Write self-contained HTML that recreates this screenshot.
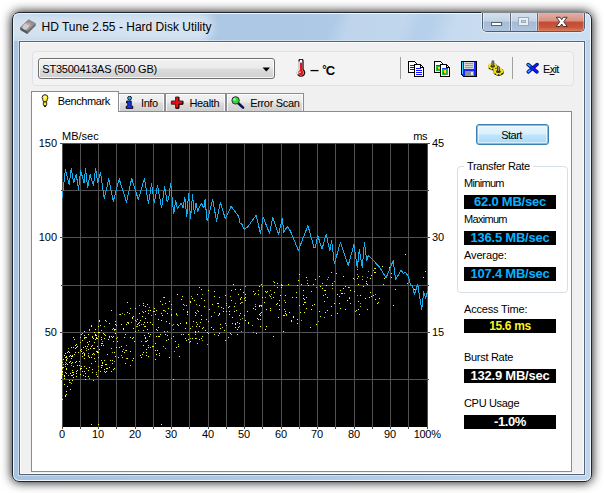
<!DOCTYPE html><html><head><meta charset="utf-8"><title>HD Tune 2.55 - Hard Disk Utility</title><style>
html,body{margin:0;padding:0;}
body{width:604px;height:493px;overflow:hidden;background:#fff;position:relative;
 font-family:"Liberation Sans",sans-serif;font-size:11px;color:#000;}
div,span{position:absolute;white-space:nowrap;box-sizing:border-box;}
.t{line-height:14px;height:14px;}
#win{left:12px;top:12px;width:580px;height:470px;border-radius:7px;border:1px solid #1f252d;
 background:linear-gradient(90deg,#a8c4e1 0px,#adc9e6 300px,#bdd5ee 580px);
 box-shadow:0 0 10.5px 0 #000,inset 0 0 0 1px rgba(255,255,255,.82);}
#client{left:19px;top:41px;width:566px;height:434px;background:#f0f0f0;border:1px solid #56657a;
 box-shadow:0 0 0 1px rgba(255,255,255,.42),inset 0 0 0 1px #fbfbfb;}
#title{left:41.5px;top:19px;font-size:12px;line-height:16px;height:16px;}
#glow{left:14px;top:14px;width:214px;height:27px;overflow:hidden;}
#glow i{position:absolute;display:block;left:-30px;top:-2px;width:229px;height:31px;border-radius:0 15px 15px 0;background:rgba(255,255,255,.5);filter:blur(5px);}
#streak{left:14px;top:14px;width:576px;height:26px;background:linear-gradient(112deg,rgba(255,255,255,0) 0%,rgba(255,255,255,0) 55%,rgba(255,255,255,.2) 58%,rgba(255,255,255,.2) 67%,rgba(255,255,255,.04) 70%,rgba(255,255,255,.04) 72%,rgba(255,255,255,.24) 76%,rgba(255,255,255,.24) 100%);}
#cap{left:482px;top:13px;width:103px;height:19px;border:1px solid #4f5d6e;border-top:none;border-radius:0 0 5px 5px;overflow:hidden;
 box-shadow:0 0 0 1px rgba(255,255,255,.45);}
#bmin{left:0;top:0;width:28px;height:18px;background:linear-gradient(#d3e0ee 0%,#c3d3e5 45%,#a4bad3 50%,#afc6de 100%);border-right:1px solid #5f6d7e;box-shadow:inset 1px 0 0 rgba(255,255,255,.5),inset -1px 0 0 rgba(255,255,255,.35);}
#bmax{left:28px;top:0;width:27px;height:18px;background:linear-gradient(#d3e0ee 0%,#c3d3e5 45%,#a4bad3 50%,#afc6de 100%);border-right:1px solid #5f6d7e;box-shadow:inset 1px 0 0 rgba(255,255,255,.5),inset -1px 0 0 rgba(255,255,255,.35);}
#bclose{left:55px;top:0;width:46px;height:18px;background:linear-gradient(#e4b0a6 0%,#d78f80 45%,#c24a34 50%,#c9573c 80%,#d88062 100%);box-shadow:inset 1px 0 0 rgba(255,255,255,.35),inset -1px 0 0 rgba(255,255,255,.35);}
#toolbar{left:32px;top:51px;width:542px;height:35px;border:1px solid #dde2ea;border-radius:4px;background:#f3f3f3;}
#combo{left:38px;top:58px;width:237px;height:21px;border:1px solid #707070;border-radius:3px;
 background:linear-gradient(#f2f2f2 0%,#ebebeb 48%,#dddddd 52%,#cfcfcf 100%);box-shadow:inset 0 0 0 1px rgba(255,255,255,.8);}
.sep{width:1px;background:#a0a0a0;}
#page{left:31px;top:111px;width:541px;height:361px;background:#fff;border:1px solid #898c95;}
.tab{top:93px;height:18px;border:1px solid #898c95;border-bottom:none;
 background:linear-gradient(#f2f2f2 0%,#ebebeb 48%,#dddddd 52%,#cfcfcf 100%);box-shadow:inset 1px 1px 0 rgba(255,255,255,.8),inset -1px 0 0 rgba(255,255,255,.8);}
#tab0{left:31px;top:91px;width:88px;height:21px;background:#fff;border:1px solid #898c95;border-bottom:none;box-shadow:none;}
.val{left:464px;width:92px;height:14px;background:#000;text-align:center;font-weight:bold;font-size:13px;line-height:14px;letter-spacing:-0.22px;}
.blue{color:#08b2ff;}
#start{left:476px;top:124px;width:73px;height:21px;border:1px solid #3c7fb1;border-radius:3px;
 background:linear-gradient(#eaf6fd 0%,#d9f0fc 48%,#bee6fd 52%,#a7d9f5 100%);box-shadow:inset 0 0 0 1px #48d8fb,inset 0 0 0 2px rgba(255,255,255,.5);
 text-align:center;line-height:19px;letter-spacing:-0.5px;padding:1px 2px 0 0;}
#grp{left:457px;top:166px;width:111px;height:127px;border:1px solid #d5dfe5;border-radius:4px;}
.r{text-align:right;}
.c{text-align:center;}
</style></head><body>
<div id="win"></div>
<div id="streak"></div>
<div id="glow"><i></i></div>
<svg width="18" height="17" viewBox="0 0 18 17" style="position:absolute;left:19px;top:18px">
<path d="M1.2 9.5 L9.6 1.4 L16.6 5.2 L16.9 7.6 L8.4 16 L1.5 12 Z" fill="#6d6f73"/>
<path d="M1.2 9.5 L9.6 1.4 L16.6 5.2 L8.2 13.3 Z" fill="#8e9195"/>
<ellipse cx="6.8" cy="8.6" rx="3.6" ry="2.7" transform="rotate(-42 6.8 8.6)" fill="#c9ccd0"/>
<path d="M7.5 5.2 L11.8 5.2 L11.2 7 L13 8 L10.6 8.4 L9.6 7 L7.6 6.8 Z" fill="#e59a8c"/>
<path d="M1.5 12 L8.4 16 L8.2 13.3 L1.2 9.5 Z" fill="#55575b"/>
</svg>
<div id="title">HD Tune 2.55 - Hard Disk Utility</div>
<div id="cap"><div id="bmin"></div><div id="bmax"></div><div id="bclose"></div></div>
<svg width="103" height="20" viewBox="0 0 103 20" style="position:absolute;left:482px;top:12px">
<rect x="9.5" y="10.5" width="10" height="3" fill="#fff" stroke="#56616f" stroke-width="1"/>
<rect x="36.5" y="5.5" width="10" height="8" fill="#e8eef5" stroke="#9aa7b6" stroke-width="1"/>
<rect x="39.5" y="8.5" width="4" height="2" fill="#cbd8e6" stroke="#9aa7b6" stroke-width="1"/>
<path d="M74.3 5.3 L78.1 5.3 L79.7 7.7 L81.3 5.3 L85.1 5.3 L81.7 9.8 L85.3 14.5 L81.3 14.5 L79.7 12 L78.1 14.5 L74.1 14.5 L77.7 9.8 Z" fill="#fff" stroke="#4a3030" stroke-width="1" stroke-linejoin="round"/>
</svg>
<div id="client"></div>
<div id="toolbar"></div>
<div id="combo"></div>
<div class="t " style="left:42.3px;top:62px;letter-spacing:-0.23px;">ST3500413AS (500 GB)</div>
<svg width="9" height="5" viewBox="0 0 9 5" style="position:absolute;left:262px;top:67px"><path d="M0.5 0.5 L8 0.5 L4.25 4.5 Z" fill="#000"/></svg>
<svg width="12" height="19" viewBox="0 0 12 19" style="position:absolute;left:295px;top:59px">
<path d="M4 2.2 A2 2 0 0 1 8 2.2 L8 10.6 A3.6 3.6 0 1 1 4 10.6 Z" fill="#fff" stroke="#111" stroke-width="1.3"/>
<path d="M4 2.6 L4 10.6 A3.6 3.6 0 0 0 3.2 15.4" fill="none" stroke="#f6f6f6" stroke-width="1.5"/>
<rect x="5" y="3.6" width="2.2" height="9.4" fill="#e8141c"/>
<circle cx="6" cy="13.5" r="2.6" fill="#e8141c"/>
<rect x="4.3" y="12.6" width="1.3" height="1.3" fill="#fff"/>
</svg>
<div class="t " style="left:310.2px;top:63px;font-weight:bold;font-size:13px;"><span style="position:static;display:inline-block;transform:scaleX(1.25);transform-origin:0 50%">&#8211;</span></div>
<div class="t " style="left:322.3px;top:61.7px;font-weight:bold;font-size:13px;"><span style="position:static;font-size:11px;letter-spacing:-0.9px;vertical-align:1.5px">&#176;</span>C</div>
<div class="sep" style="left:400px;top:57px;height:22px"></div>
<svg width="16" height="16" viewBox="0 0 16 16" style="position:absolute;left:408px;top:61px" shape-rendering="crispEdges">
<path d="M0.5 0.5 H6.5 L9.5 3.5 V11.5 H0.5 Z" fill="#fff" stroke="#000"/>
<path d="M2 4.5H7M2 6.5H7M2 8.5H7" stroke="#1010ff"/>
<path d="M6.5 3.5 H12.5 L15.5 6.5 V15.5 H6.5 Z" fill="#fff" stroke="#000"/>
<path d="M12.5 3.5V6.5H15.5" fill="none" stroke="#000"/>
<path d="M8 7.5H13M8 9.5H14M8 11.5H14M8 13.5H14" stroke="#1010ff"/>
</svg>
<svg width="16" height="16" viewBox="0 0 16 16" style="position:absolute;left:434px;top:61px" shape-rendering="crispEdges">
<path d="M0.5 0.5 H6.5 L9.5 3.5 V11.5 H0.5 Z" fill="#fff" stroke="#000"/>
<rect x="2" y="4" width="5" height="6" fill="#22c030"/><rect x="2" y="4" width="5" height="1" fill="#2040ff"/><rect x="4" y="6" width="2" height="2" fill="#ffe000"/><rect x="3" y="7" width="1" height="2" fill="#e02020"/>
<path d="M6.5 3.5 H12.5 L15.5 6.5 V15.5 H6.5 Z" fill="#fff" stroke="#000"/>
<path d="M12.5 3.5V6.5H15.5" fill="none" stroke="#000"/>
<rect x="8" y="7" width="6" height="7" fill="#22c030"/><rect x="8" y="7" width="6" height="1" fill="#2040ff"/><rect x="10" y="9" width="2" height="3" fill="#ffe000"/><rect x="9" y="11" width="1" height="2" fill="#e02020"/><rect x="12" y="12" width="2" height="2" fill="#808080"/>
</svg>
<svg width="16" height="16" viewBox="0 0 16 16" style="position:absolute;left:461px;top:61px" shape-rendering="crispEdges">
<path d="M0.5 0.5 H15.5 V15.5 H2.5 L0.5 13.5 Z" fill="#1428ff" stroke="#000"/>
<rect x="3" y="1" width="10" height="7" fill="#d8d8d8"/>
<path d="M4 2.5H12M4 4.5H12M4 6.5H12" stroke="#9a9a9a"/>
<rect x="4" y="10" width="9" height="5" fill="#909090"/>
<rect x="10" y="11" width="2" height="3" fill="#e8e8e8"/>
<rect x="1" y="1" width="1" height="12" fill="#40d0ff"/>
</svg>
<svg width="18" height="17" viewBox="0 0 18 17" style="position:absolute;left:487px;top:60px">
<ellipse cx="6" cy="6.9" rx="4.9" ry="3.5" fill="#1a1a1a"/>
<ellipse cx="11.7" cy="12.1" rx="5.3" ry="3.8" fill="#1a1a1a"/>
<ellipse cx="5.7" cy="6.1" rx="4" ry="2.7" fill="#f2e418" stroke="#f2e418" stroke-width="1.8" stroke-dasharray="1.6 1.3"/>
<ellipse cx="11.4" cy="11.2" rx="4.4" ry="3" fill="#f2e418" stroke="#f2e418" stroke-width="1.8" stroke-dasharray="1.7 1.4"/>
<ellipse cx="5.7" cy="6.3" rx="2.3" ry="1.4" fill="#3a3200"/>
<ellipse cx="11.4" cy="11.5" rx="2.5" ry="1.5" fill="#3a3200"/>
<rect x="5" y="0.8" width="1.8" height="5.6" rx="0.6" fill="#a8a8a8" stroke="#222" stroke-width="0.8"/>
<rect x="10.5" y="6.4" width="1.8" height="5.2" rx="0.6" fill="#a8a8a8" stroke="#222" stroke-width="0.8"/>
</svg>
<div class="sep" style="left:512px;top:57px;height:22px"></div>
<svg width="14" height="13" viewBox="0 0 14 13" style="position:absolute;left:526px;top:62px">
<path d="M2.2 2.6 L10.9 9.8 M11 2.5 L2.3 9.9" stroke="#0a0f50" stroke-width="3.5" stroke-linecap="round"/>
<path d="M2.2 2.6 L10.9 9.8 M11 2.5 L2.3 9.9" stroke="#0c18ff" stroke-width="2.2" stroke-linecap="round"/>
<path d="M2 2.4 L4 4.1 M2.2 9.8 L4.2 8.2" stroke="#20c8ff" stroke-width="1.3" stroke-linecap="round"/>
</svg>
<div class="t " style="left:543px;top:62px;letter-spacing:-0.7px;">E<u>x</u>it</div>
<div id="page"></div>
<div class="tab" style="left:118px;width:47px"></div>
<div class="tab" style="left:165px;width:61px"></div>
<div class="tab" style="left:226px;width:78px"></div>
<div id="tab0"></div>
<svg width="8" height="14" viewBox="0 0 8 14" style="position:absolute;left:41px;top:94px">
<path d="M4 0.7 A2.9 2.9 0 0 1 6.9 3.6 C6.9 5.4 5.6 6 5.5 7.8 L2.5 7.8 C2.4 6 1.1 5.4 1.1 3.6 A2.9 2.9 0 0 1 4 0.7 Z" fill="#ffef20" stroke="#222" stroke-width="1"/>
<rect x="2.3" y="8" width="3.4" height="3.6" rx="0.8" fill="#ffef20" stroke="#222" stroke-width="1"/>
<rect x="3" y="11.6" width="2" height="1.4" fill="#222"/>
<rect x="3.4" y="2" width="1.2" height="2.6" fill="#fff"/>
</svg>
<div class="t " style="left:57.8px;top:94px;letter-spacing:-0.4px;">Benchmark</div>
<svg width="9" height="13" viewBox="0 0 9 13" style="position:absolute;left:125px;top:96px">
<circle cx="4.6" cy="2.1" r="1.9" fill="#28b8ff" stroke="#000" stroke-width="0.9"/>
<path d="M1.6 5 H6.2 V10.2 H7.8 V12.4 H1.2 V10.2 H2.8 V7 H1.6 Z" fill="#1838f0" stroke="#000" stroke-width="0.9"/>
</svg>
<div class="t " style="left:141px;top:96px;letter-spacing:-0.4px;">Info</div>
<svg width="14" height="13" viewBox="0 0 14 13" style="position:absolute;left:170px;top:96px">
<path d="M5.6 1 H8.8 V5 H12.8 V8.2 H8.8 V12.2 H5.6 V8.2 H1.4 V5 H5.6 Z" fill="#e81010" stroke="#401010" stroke-width="0.9"/><path d="M8.9 1.2 V5 M12.9 5.2 V8.2 H8.9 V12.2 H5.8" fill="none" stroke="#200" stroke-width="1"/>
</svg>
<div class="t " style="left:189.5px;top:96px;letter-spacing:-0.35px;">Health</div>
<svg width="14" height="13" viewBox="0 0 14 13" style="position:absolute;left:231px;top:96px">
<path d="M6.5 6.5 L12 11.6" stroke="#101050" stroke-width="2.6" stroke-linecap="round"/>
<circle cx="4.6" cy="4.4" r="3.7" fill="#30d838" stroke="#333" stroke-width="1"/>
<circle cx="3.6" cy="3.4" r="1.2" fill="#b8ffb8"/>
</svg>
<div class="t " style="left:250.2px;top:96px;letter-spacing:-0.33px;">Error Scan</div>
<svg width="604" height="493" viewBox="0 0 604 493" style="position:absolute;left:0;top:0">
<rect x="62" y="143" width="366" height="284" fill="#000"/>
<g shape-rendering="crispEdges"><rect x="62" y="143" width="1" height="284" fill="#525252"/><rect x="62" y="427" width="1" height="2" fill="#4a4a4a"/><rect x="80" y="143" width="1" height="284" fill="#525252"/><rect x="80" y="427" width="1" height="2" fill="#4a4a4a"/><rect x="98" y="143" width="1" height="284" fill="#525252"/><rect x="98" y="427" width="1" height="2" fill="#4a4a4a"/><rect x="116" y="143" width="1" height="284" fill="#525252"/><rect x="116" y="427" width="1" height="2" fill="#4a4a4a"/><rect x="135" y="143" width="1" height="284" fill="#525252"/><rect x="135" y="427" width="1" height="2" fill="#4a4a4a"/><rect x="153" y="143" width="1" height="284" fill="#525252"/><rect x="153" y="427" width="1" height="2" fill="#4a4a4a"/><rect x="171" y="143" width="1" height="284" fill="#525252"/><rect x="171" y="427" width="1" height="2" fill="#4a4a4a"/><rect x="189" y="143" width="1" height="284" fill="#525252"/><rect x="189" y="427" width="1" height="2" fill="#4a4a4a"/><rect x="208" y="143" width="1" height="284" fill="#525252"/><rect x="208" y="427" width="1" height="2" fill="#4a4a4a"/><rect x="226" y="143" width="1" height="284" fill="#525252"/><rect x="226" y="427" width="1" height="2" fill="#4a4a4a"/><rect x="244" y="143" width="1" height="284" fill="#525252"/><rect x="244" y="427" width="1" height="2" fill="#4a4a4a"/><rect x="262" y="143" width="1" height="284" fill="#525252"/><rect x="262" y="427" width="1" height="2" fill="#4a4a4a"/><rect x="281" y="143" width="1" height="284" fill="#525252"/><rect x="281" y="427" width="1" height="2" fill="#4a4a4a"/><rect x="299" y="143" width="1" height="284" fill="#525252"/><rect x="299" y="427" width="1" height="2" fill="#4a4a4a"/><rect x="317" y="143" width="1" height="284" fill="#525252"/><rect x="317" y="427" width="1" height="2" fill="#4a4a4a"/><rect x="335" y="143" width="1" height="284" fill="#525252"/><rect x="335" y="427" width="1" height="2" fill="#4a4a4a"/><rect x="354" y="143" width="1" height="284" fill="#525252"/><rect x="354" y="427" width="1" height="2" fill="#4a4a4a"/><rect x="372" y="143" width="1" height="284" fill="#525252"/><rect x="372" y="427" width="1" height="2" fill="#4a4a4a"/><rect x="390" y="143" width="1" height="284" fill="#525252"/><rect x="390" y="427" width="1" height="2" fill="#4a4a4a"/><rect x="408" y="143" width="1" height="284" fill="#525252"/><rect x="408" y="427" width="1" height="2" fill="#4a4a4a"/><rect x="427" y="143" width="1" height="284" fill="#525252"/><rect x="427" y="427" width="1" height="2" fill="#4a4a4a"/><rect x="62" y="143" width="366" height="1" fill="#525252"/><rect x="60" y="143" width="2" height="1" fill="#4a4a4a"/><rect x="428" y="143" width="2" height="1" fill="#4a4a4a"/><rect x="62" y="190" width="366" height="1" fill="#525252"/><rect x="61" y="190" width="1" height="1" fill="#4a4a4a"/><rect x="428" y="190" width="1" height="1" fill="#4a4a4a"/><rect x="62" y="237" width="366" height="1" fill="#525252"/><rect x="60" y="237" width="2" height="1" fill="#4a4a4a"/><rect x="428" y="237" width="2" height="1" fill="#4a4a4a"/><rect x="62" y="285" width="366" height="1" fill="#525252"/><rect x="61" y="285" width="1" height="1" fill="#4a4a4a"/><rect x="428" y="285" width="1" height="1" fill="#4a4a4a"/><rect x="62" y="332" width="366" height="1" fill="#525252"/><rect x="60" y="332" width="2" height="1" fill="#4a4a4a"/><rect x="428" y="332" width="2" height="1" fill="#4a4a4a"/><rect x="62" y="379" width="366" height="1" fill="#525252"/><rect x="61" y="379" width="1" height="1" fill="#4a4a4a"/><rect x="428" y="379" width="1" height="1" fill="#4a4a4a"/></g>
<g fill="#ffff00" shape-rendering="crispEdges"><rect x="62" y="362" width="1" height="1" opacity=".75"/><rect x="62" y="367" width="1" height="1" opacity="1"/><rect x="62" y="368" width="1" height="1" opacity=".75"/><rect x="62" y="371" width="1" height="1" opacity="1"/><rect x="62" y="372" width="1" height="1" opacity=".75"/><rect x="62" y="374" width="1" height="1" opacity="1"/><rect x="62" y="399" width="1" height="1" opacity="1"/><rect x="63" y="359" width="1" height="1" opacity="1"/><rect x="63" y="364" width="1" height="1" opacity=".75"/><rect x="63" y="367" width="1" height="1" opacity="1"/><rect x="64" y="355" width="1" height="1" opacity="1"/><rect x="64" y="375" width="1" height="1" opacity="1"/><rect x="64" y="376" width="1" height="1" opacity="1"/><rect x="64" y="378" width="1" height="1" opacity="1"/><rect x="64" y="384" width="1" height="1" opacity="1"/><rect x="65" y="353" width="1" height="1" opacity="1"/><rect x="65" y="357" width="1" height="1" opacity="1"/><rect x="65" y="362" width="1" height="1" opacity=".75"/><rect x="65" y="364" width="1" height="1" opacity="1"/><rect x="65" y="366" width="1" height="1" opacity=".75"/><rect x="65" y="372" width="1" height="1" opacity="1"/><rect x="65" y="395" width="1" height="1" opacity="1"/><rect x="65" y="396" width="1" height="1" opacity="1"/><rect x="66" y="356" width="1" height="1" opacity="1"/><rect x="66" y="357" width="1" height="1" opacity="1"/><rect x="66" y="359" width="1" height="1" opacity="1"/><rect x="66" y="360" width="1" height="1" opacity="1"/><rect x="66" y="363" width="1" height="1" opacity=".75"/><rect x="66" y="368" width="1" height="1" opacity="1"/><rect x="66" y="369" width="1" height="1" opacity="1"/><rect x="66" y="373" width="1" height="1" opacity="1"/><rect x="66" y="391" width="1" height="1" opacity="1"/><rect x="66" y="394" width="1" height="1" opacity="1"/><rect x="67" y="352" width="1" height="1" opacity="1"/><rect x="67" y="358" width="1" height="1" opacity=".75"/><rect x="67" y="364" width="1" height="1" opacity="1"/><rect x="67" y="386" width="1" height="1" opacity="1"/><rect x="68" y="348" width="1" height="1" opacity=".75"/><rect x="68" y="351" width="1" height="1" opacity="1"/><rect x="68" y="375" width="1" height="1" opacity=".75"/><rect x="69" y="352" width="1" height="1" opacity="1"/><rect x="69" y="356" width="1" height="1" opacity="1"/><rect x="69" y="362" width="1" height="1" opacity="1"/><rect x="69" y="380" width="1" height="1" opacity="1"/><rect x="69" y="382" width="1" height="1" opacity=".75"/><rect x="70" y="355" width="1" height="1" opacity="1"/><rect x="70" y="361" width="1" height="1" opacity="1"/><rect x="70" y="373" width="1" height="1" opacity="1"/><rect x="70" y="382" width="1" height="1" opacity=".75"/><rect x="70" y="389" width="1" height="1" opacity="1"/><rect x="71" y="347" width="1" height="1" opacity="1"/><rect x="71" y="356" width="1" height="1" opacity="1"/><rect x="71" y="358" width="1" height="1" opacity="1"/><rect x="71" y="363" width="1" height="1" opacity="1"/><rect x="71" y="365" width="1" height="1" opacity=".75"/><rect x="71" y="375" width="1" height="1" opacity="1"/><rect x="71" y="383" width="1" height="1" opacity=".75"/><rect x="72" y="355" width="1" height="1" opacity="1"/><rect x="72" y="356" width="1" height="1" opacity="1"/><rect x="72" y="362" width="1" height="1" opacity="1"/><rect x="72" y="370" width="1" height="1" opacity="1"/><rect x="72" y="372" width="1" height="1" opacity="1"/><rect x="72" y="375" width="1" height="1" opacity="1"/><rect x="72" y="380" width="1" height="1" opacity="1"/><rect x="73" y="337" width="1" height="1" opacity="1"/><rect x="73" y="347" width="1" height="1" opacity="1"/><rect x="73" y="366" width="1" height="1" opacity="1"/><rect x="73" y="372" width="1" height="1" opacity="1"/><rect x="73" y="374" width="1" height="1" opacity="1"/><rect x="73" y="377" width="1" height="1" opacity="1"/><rect x="74" y="339" width="1" height="1" opacity="1"/><rect x="74" y="354" width="1" height="1" opacity="1"/><rect x="75" y="345" width="1" height="1" opacity="1"/><rect x="75" y="348" width="1" height="1" opacity="1"/><rect x="75" y="352" width="1" height="1" opacity="1"/><rect x="75" y="362" width="1" height="1" opacity="1"/><rect x="76" y="344" width="1" height="1" opacity="1"/><rect x="76" y="347" width="1" height="1" opacity="1"/><rect x="76" y="361" width="1" height="1" opacity="1"/><rect x="76" y="371" width="1" height="1" opacity="1"/><rect x="76" y="373" width="1" height="1" opacity="1"/><rect x="76" y="376" width="1" height="1" opacity="1"/><rect x="77" y="346" width="1" height="1" opacity="1"/><rect x="77" y="365" width="1" height="1" opacity="1"/><rect x="77" y="370" width="1" height="1" opacity="1"/><rect x="78" y="352" width="1" height="1" opacity="1"/><rect x="79" y="361" width="1" height="1" opacity="1"/><rect x="79" y="365" width="1" height="1" opacity="1"/><rect x="80" y="337" width="1" height="1" opacity="1"/><rect x="80" y="342" width="1" height="1" opacity=".75"/><rect x="80" y="350" width="1" height="1" opacity="1"/><rect x="80" y="368" width="1" height="1" opacity="1"/><rect x="80" y="369" width="1" height="1" opacity="1"/><rect x="80" y="374" width="1" height="1" opacity="1"/><rect x="81" y="334" width="1" height="1" opacity="1"/><rect x="81" y="349" width="1" height="1" opacity="1"/><rect x="81" y="351" width="1" height="1" opacity="1"/><rect x="81" y="366" width="1" height="1" opacity="1"/><rect x="81" y="368" width="1" height="1" opacity="1"/><rect x="82" y="333" width="1" height="1" opacity=".75"/><rect x="82" y="340" width="1" height="1" opacity="1"/><rect x="82" y="353" width="1" height="1" opacity="1"/><rect x="82" y="356" width="1" height="1" opacity="1"/><rect x="82" y="371" width="1" height="1" opacity="1"/><rect x="83" y="347" width="1" height="1" opacity="1"/><rect x="83" y="352" width="1" height="1" opacity=".75"/><rect x="83" y="375" width="1" height="1" opacity="1"/><rect x="84" y="331" width="1" height="1" opacity="1"/><rect x="84" y="335" width="1" height="1" opacity="1"/><rect x="84" y="337" width="1" height="1" opacity=".75"/><rect x="84" y="338" width="1" height="1" opacity="1"/><rect x="84" y="353" width="1" height="1" opacity="1"/><rect x="84" y="354" width="1" height="1" opacity="1"/><rect x="84" y="355" width="1" height="1" opacity="1"/><rect x="84" y="358" width="1" height="1" opacity="1"/><rect x="84" y="366" width="1" height="1" opacity="1"/><rect x="84" y="371" width="1" height="1" opacity="1"/><rect x="85" y="337" width="1" height="1" opacity="1"/><rect x="85" y="346" width="1" height="1" opacity="1"/><rect x="85" y="373" width="1" height="1" opacity="1"/><rect x="85" y="376" width="1" height="1" opacity="1"/><rect x="85" y="379" width="1" height="1" opacity="1"/><rect x="86" y="337" width="1" height="1" opacity="1"/><rect x="86" y="348" width="1" height="1" opacity=".75"/><rect x="86" y="350" width="1" height="1" opacity=".75"/><rect x="86" y="368" width="1" height="1" opacity="1"/><rect x="87" y="342" width="1" height="1" opacity="1"/><rect x="87" y="346" width="1" height="1" opacity="1"/><rect x="88" y="334" width="1" height="1" opacity="1"/><rect x="88" y="344" width="1" height="1" opacity="1"/><rect x="88" y="349" width="1" height="1" opacity="1"/><rect x="88" y="353" width="1" height="1" opacity=".75"/><rect x="88" y="355" width="1" height="1" opacity=".75"/><rect x="88" y="356" width="1" height="1" opacity=".75"/><rect x="88" y="370" width="1" height="1" opacity="1"/><rect x="88" y="376" width="1" height="1" opacity="1"/><rect x="89" y="329" width="1" height="1" opacity="1"/><rect x="89" y="330" width="1" height="1" opacity=".75"/><rect x="89" y="341" width="1" height="1" opacity="1"/><rect x="89" y="357" width="1" height="1" opacity="1"/><rect x="89" y="367" width="1" height="1" opacity="1"/><rect x="89" y="378" width="1" height="1" opacity=".75"/><rect x="90" y="348" width="1" height="1" opacity="1"/><rect x="91" y="325" width="1" height="1" opacity="1"/><rect x="91" y="326" width="1" height="1" opacity="1"/><rect x="91" y="346" width="1" height="1" opacity="1"/><rect x="91" y="357" width="1" height="1" opacity="1"/><rect x="91" y="363" width="1" height="1" opacity="1"/><rect x="91" y="424" width="1" height="1" opacity="1"/><rect x="92" y="336" width="1" height="1" opacity="1"/><rect x="92" y="337" width="1" height="1" opacity="1"/><rect x="92" y="345" width="1" height="1" opacity="1"/><rect x="92" y="354" width="1" height="1" opacity="1"/><rect x="92" y="369" width="1" height="1" opacity="1"/><rect x="92" y="372" width="1" height="1" opacity="1"/><rect x="93" y="338" width="1" height="1" opacity="1"/><rect x="93" y="348" width="1" height="1" opacity="1"/><rect x="93" y="353" width="1" height="1" opacity="1"/><rect x="93" y="380" width="1" height="1" opacity="1"/><rect x="94" y="332" width="1" height="1" opacity="1"/><rect x="94" y="342" width="1" height="1" opacity="1"/><rect x="94" y="348" width="1" height="1" opacity="1"/><rect x="94" y="354" width="1" height="1" opacity="1"/><rect x="94" y="358" width="1" height="1" opacity="1"/><rect x="95" y="329" width="1" height="1" opacity="1"/><rect x="95" y="334" width="1" height="1" opacity="1"/><rect x="95" y="335" width="1" height="1" opacity="1"/><rect x="95" y="339" width="1" height="1" opacity="1"/><rect x="95" y="361" width="1" height="1" opacity="1"/><rect x="96" y="335" width="1" height="1" opacity="1"/><rect x="96" y="337" width="1" height="1" opacity="1"/><rect x="96" y="338" width="1" height="1" opacity="1"/><rect x="96" y="351" width="1" height="1" opacity="1"/><rect x="96" y="372" width="1" height="1" opacity=".75"/><rect x="96" y="374" width="1" height="1" opacity="1"/><rect x="97" y="338" width="1" height="1" opacity="1"/><rect x="97" y="346" width="1" height="1" opacity="1"/><rect x="97" y="351" width="1" height="1" opacity="1"/><rect x="97" y="352" width="1" height="1" opacity="1"/><rect x="97" y="376" width="1" height="1" opacity="1"/><rect x="98" y="326" width="1" height="1" opacity="1"/><rect x="98" y="332" width="1" height="1" opacity="1"/><rect x="98" y="336" width="1" height="1" opacity=".75"/><rect x="98" y="352" width="1" height="1" opacity="1"/><rect x="98" y="357" width="1" height="1" opacity="1"/><rect x="98" y="366" width="1" height="1" opacity=".75"/><rect x="98" y="370" width="1" height="1" opacity=".75"/><rect x="98" y="424" width="1" height="1" opacity="1"/><rect x="99" y="320" width="1" height="1" opacity="1"/><rect x="99" y="321" width="1" height="1" opacity="1"/><rect x="99" y="332" width="1" height="1" opacity="1"/><rect x="99" y="349" width="1" height="1" opacity="1"/><rect x="100" y="325" width="1" height="1" opacity="1"/><rect x="100" y="371" width="1" height="1" opacity="1"/><rect x="101" y="330" width="1" height="1" opacity="1"/><rect x="101" y="337" width="1" height="1" opacity="1"/><rect x="101" y="339" width="1" height="1" opacity="1"/><rect x="101" y="343" width="1" height="1" opacity="1"/><rect x="101" y="345" width="1" height="1" opacity="1"/><rect x="101" y="360" width="1" height="1" opacity="1"/><rect x="101" y="365" width="1" height="1" opacity="1"/><rect x="101" y="367" width="1" height="1" opacity="1"/><rect x="102" y="341" width="1" height="1" opacity=".75"/><rect x="102" y="343" width="1" height="1" opacity="1"/><rect x="102" y="362" width="1" height="1" opacity="1"/><rect x="102" y="363" width="1" height="1" opacity="1"/><rect x="102" y="365" width="1" height="1" opacity="1"/><rect x="103" y="333" width="1" height="1" opacity="1"/><rect x="103" y="345" width="1" height="1" opacity="1"/><rect x="104" y="326" width="1" height="1" opacity=".75"/><rect x="104" y="334" width="1" height="1" opacity="1"/><rect x="104" y="338" width="1" height="1" opacity="1"/><rect x="104" y="360" width="1" height="1" opacity="1"/><rect x="104" y="369" width="1" height="1" opacity="1"/><rect x="104" y="371" width="1" height="1" opacity="1"/><rect x="105" y="320" width="1" height="1" opacity="1"/><rect x="105" y="335" width="1" height="1" opacity="1"/><rect x="105" y="364" width="1" height="1" opacity="1"/><rect x="105" y="372" width="1" height="1" opacity="1"/><rect x="106" y="321" width="1" height="1" opacity=".75"/><rect x="106" y="364" width="1" height="1" opacity="1"/><rect x="106" y="368" width="1" height="1" opacity="1"/><rect x="106" y="371" width="1" height="1" opacity="1"/><rect x="107" y="354" width="1" height="1" opacity="1"/><rect x="107" y="368" width="1" height="1" opacity="1"/><rect x="108" y="339" width="1" height="1" opacity="1"/><rect x="109" y="323" width="1" height="1" opacity="1"/><rect x="109" y="336" width="1" height="1" opacity="1"/><rect x="109" y="337" width="1" height="1" opacity="1"/><rect x="109" y="367" width="1" height="1" opacity="1"/><rect x="110" y="360" width="1" height="1" opacity="1"/><rect x="111" y="310" width="1" height="1" opacity="1"/><rect x="111" y="336" width="1" height="1" opacity="1"/><rect x="111" y="348" width="1" height="1" opacity="1"/><rect x="111" y="371" width="1" height="1" opacity="1"/><rect x="112" y="329" width="1" height="1" opacity=".75"/><rect x="112" y="337" width="1" height="1" opacity="1"/><rect x="112" y="352" width="1" height="1" opacity=".75"/><rect x="112" y="360" width="1" height="1" opacity="1"/><rect x="112" y="363" width="1" height="1" opacity="1"/><rect x="113" y="328" width="1" height="1" opacity="1"/><rect x="113" y="336" width="1" height="1" opacity="1"/><rect x="113" y="341" width="1" height="1" opacity="1"/><rect x="113" y="369" width="1" height="1" opacity="1"/><rect x="114" y="329" width="1" height="1" opacity="1"/><rect x="114" y="330" width="1" height="1" opacity=".75"/><rect x="114" y="352" width="1" height="1" opacity="1"/><rect x="114" y="361" width="1" height="1" opacity=".75"/><rect x="114" y="368" width="1" height="1" opacity="1"/><rect x="115" y="321" width="1" height="1" opacity="1"/><rect x="115" y="324" width="1" height="1" opacity="1"/><rect x="115" y="329" width="1" height="1" opacity="1"/><rect x="115" y="333" width="1" height="1" opacity="1"/><rect x="115" y="356" width="1" height="1" opacity="1"/><rect x="116" y="325" width="1" height="1" opacity="1"/><rect x="116" y="338" width="1" height="1" opacity="1"/><rect x="116" y="347" width="1" height="1" opacity="1"/><rect x="117" y="337" width="1" height="1" opacity=".75"/><rect x="117" y="341" width="1" height="1" opacity="1"/><rect x="118" y="357" width="1" height="1" opacity="1"/><rect x="119" y="314" width="1" height="1" opacity=".75"/><rect x="119" y="347" width="1" height="1" opacity="1"/><rect x="120" y="314" width="1" height="1" opacity="1"/><rect x="121" y="324" width="1" height="1" opacity="1"/><rect x="121" y="346" width="1" height="1" opacity="1"/><rect x="121" y="355" width="1" height="1" opacity=".75"/><rect x="122" y="313" width="1" height="1" opacity=".75"/><rect x="122" y="351" width="1" height="1" opacity="1"/><rect x="122" y="357" width="1" height="1" opacity="1"/><rect x="123" y="328" width="1" height="1" opacity="1"/><rect x="123" y="329" width="1" height="1" opacity="1"/><rect x="123" y="349" width="1" height="1" opacity=".75"/><rect x="124" y="314" width="1" height="1" opacity=".75"/><rect x="124" y="337" width="1" height="1" opacity="1"/><rect x="124" y="352" width="1" height="1" opacity="1"/><rect x="125" y="334" width="1" height="1" opacity="1"/><rect x="125" y="350" width="1" height="1" opacity=".75"/><rect x="125" y="363" width="1" height="1" opacity="1"/><rect x="126" y="324" width="1" height="1" opacity="1"/><rect x="126" y="345" width="1" height="1" opacity=".75"/><rect x="126" y="350" width="1" height="1" opacity="1"/><rect x="126" y="358" width="1" height="1" opacity=".75"/><rect x="127" y="302" width="1" height="1" opacity="1"/><rect x="127" y="312" width="1" height="1" opacity="1"/><rect x="127" y="322" width="1" height="1" opacity="1"/><rect x="127" y="358" width="1" height="1" opacity="1"/><rect x="128" y="322" width="1" height="1" opacity=".75"/><rect x="128" y="323" width="1" height="1" opacity="1"/><rect x="129" y="313" width="1" height="1" opacity="1"/><rect x="130" y="308" width="1" height="1" opacity=".75"/><rect x="130" y="337" width="1" height="1" opacity="1"/><rect x="130" y="351" width="1" height="1" opacity="1"/><rect x="130" y="365" width="1" height="1" opacity=".75"/><rect x="131" y="322" width="1" height="1" opacity=".75"/><rect x="132" y="317" width="1" height="1" opacity="1"/><rect x="132" y="318" width="1" height="1" opacity="1"/><rect x="132" y="338" width="1" height="1" opacity="1"/><rect x="132" y="360" width="1" height="1" opacity="1"/><rect x="133" y="316" width="1" height="1" opacity="1"/><rect x="133" y="328" width="1" height="1" opacity="1"/><rect x="133" y="337" width="1" height="1" opacity="1"/><rect x="133" y="358" width="1" height="1" opacity="1"/><rect x="134" y="341" width="1" height="1" opacity="1"/><rect x="135" y="308" width="1" height="1" opacity="1"/><rect x="135" y="320" width="1" height="1" opacity="1"/><rect x="135" y="331" width="1" height="1" opacity="1"/><rect x="136" y="321" width="1" height="1" opacity=".75"/><rect x="136" y="326" width="1" height="1" opacity=".75"/><rect x="137" y="319" width="1" height="1" opacity="1"/><rect x="137" y="324" width="1" height="1" opacity="1"/><rect x="137" y="326" width="1" height="1" opacity=".75"/><rect x="138" y="323" width="1" height="1" opacity="1"/><rect x="138" y="330" width="1" height="1" opacity=".75"/><rect x="139" y="305" width="1" height="1" opacity=".75"/><rect x="139" y="313" width="1" height="1" opacity="1"/><rect x="139" y="322" width="1" height="1" opacity="1"/><rect x="139" y="325" width="1" height="1" opacity="1"/><rect x="140" y="320" width="1" height="1" opacity="1"/><rect x="140" y="355" width="1" height="1" opacity="1"/><rect x="141" y="324" width="1" height="1" opacity=".75"/><rect x="141" y="341" width="1" height="1" opacity=".75"/><rect x="141" y="357" width="1" height="1" opacity="1"/><rect x="142" y="311" width="1" height="1" opacity=".75"/><rect x="142" y="316" width="1" height="1" opacity="1"/><rect x="142" y="354" width="1" height="1" opacity="1"/><rect x="143" y="303" width="1" height="1" opacity="1"/><rect x="143" y="305" width="1" height="1" opacity="1"/><rect x="143" y="312" width="1" height="1" opacity="1"/><rect x="143" y="324" width="1" height="1" opacity="1"/><rect x="143" y="330" width="1" height="1" opacity="1"/><rect x="143" y="345" width="1" height="1" opacity="1"/><rect x="143" y="352" width="1" height="1" opacity="1"/><rect x="144" y="322" width="1" height="1" opacity="1"/><rect x="144" y="326" width="1" height="1" opacity="1"/><rect x="144" y="335" width="1" height="1" opacity="1"/><rect x="145" y="306" width="1" height="1" opacity="1"/><rect x="145" y="311" width="1" height="1" opacity="1"/><rect x="145" y="318" width="1" height="1" opacity="1"/><rect x="145" y="326" width="1" height="1" opacity="1"/><rect x="145" y="337" width="1" height="1" opacity="1"/><rect x="145" y="338" width="1" height="1" opacity="1"/><rect x="145" y="341" width="1" height="1" opacity="1"/><rect x="146" y="341" width="1" height="1" opacity="1"/><rect x="146" y="349" width="1" height="1" opacity="1"/><rect x="146" y="352" width="1" height="1" opacity="1"/><rect x="146" y="355" width="1" height="1" opacity="1"/><rect x="147" y="304" width="1" height="1" opacity="1"/><rect x="147" y="322" width="1" height="1" opacity="1"/><rect x="147" y="329" width="1" height="1" opacity="1"/><rect x="147" y="340" width="1" height="1" opacity="1"/><rect x="148" y="310" width="1" height="1" opacity="1"/><rect x="148" y="313" width="1" height="1" opacity="1"/><rect x="148" y="333" width="1" height="1" opacity="1"/><rect x="148" y="345" width="1" height="1" opacity=".75"/><rect x="148" y="347" width="1" height="1" opacity="1"/><rect x="148" y="356" width="1" height="1" opacity="1"/><rect x="149" y="307" width="1" height="1" opacity=".75"/><rect x="149" y="336" width="1" height="1" opacity="1"/><rect x="150" y="310" width="1" height="1" opacity="1"/><rect x="150" y="322" width="1" height="1" opacity="1"/><rect x="150" y="334" width="1" height="1" opacity="1"/><rect x="150" y="347" width="1" height="1" opacity=".75"/><rect x="151" y="315" width="1" height="1" opacity=".75"/><rect x="152" y="324" width="1" height="1" opacity="1"/><rect x="152" y="346" width="1" height="1" opacity="1"/><rect x="153" y="311" width="1" height="1" opacity="1"/><rect x="153" y="346" width="1" height="1" opacity="1"/><rect x="154" y="308" width="1" height="1" opacity="1"/><rect x="154" y="311" width="1" height="1" opacity="1"/><rect x="155" y="314" width="1" height="1" opacity="1"/><rect x="155" y="343" width="1" height="1" opacity="1"/><rect x="155" y="350" width="1" height="1" opacity="1"/><rect x="155" y="359" width="1" height="1" opacity="1"/><rect x="156" y="310" width="1" height="1" opacity="1"/><rect x="156" y="329" width="1" height="1" opacity="1"/><rect x="156" y="336" width="1" height="1" opacity="1"/><rect x="156" y="354" width="1" height="1" opacity="1"/><rect x="157" y="330" width="1" height="1" opacity="1"/><rect x="157" y="350" width="1" height="1" opacity="1"/><rect x="158" y="319" width="1" height="1" opacity="1"/><rect x="158" y="327" width="1" height="1" opacity="1"/><rect x="158" y="336" width="1" height="1" opacity="1"/><rect x="159" y="336" width="1" height="1" opacity="1"/><rect x="159" y="353" width="1" height="1" opacity="1"/><rect x="159" y="355" width="1" height="1" opacity="1"/><rect x="160" y="301" width="1" height="1" opacity="1"/><rect x="160" y="334" width="1" height="1" opacity="1"/><rect x="161" y="313" width="1" height="1" opacity="1"/><rect x="161" y="320" width="1" height="1" opacity="1"/><rect x="161" y="424" width="1" height="1" opacity="1"/><rect x="162" y="304" width="1" height="1" opacity="1"/><rect x="162" y="315" width="1" height="1" opacity="1"/><rect x="163" y="297" width="1" height="1" opacity=".75"/><rect x="163" y="310" width="1" height="1" opacity="1"/><rect x="163" y="346" width="1" height="1" opacity=".75"/><rect x="164" y="297" width="1" height="1" opacity="1"/><rect x="164" y="310" width="1" height="1" opacity=".75"/><rect x="164" y="331" width="1" height="1" opacity="1"/><rect x="165" y="303" width="1" height="1" opacity="1"/><rect x="165" y="311" width="1" height="1" opacity=".75"/><rect x="165" y="334" width="1" height="1" opacity="1"/><rect x="165" y="348" width="1" height="1" opacity=".75"/><rect x="166" y="321" width="1" height="1" opacity="1"/><rect x="166" y="340" width="1" height="1" opacity="1"/><rect x="167" y="313" width="1" height="1" opacity="1"/><rect x="167" y="331" width="1" height="1" opacity=".75"/><rect x="167" y="335" width="1" height="1" opacity="1"/><rect x="168" y="308" width="1" height="1" opacity="1"/><rect x="168" y="339" width="1" height="1" opacity="1"/><rect x="169" y="301" width="1" height="1" opacity="1"/><rect x="169" y="323" width="1" height="1" opacity="1"/><rect x="169" y="357" width="1" height="1" opacity="1"/><rect x="171" y="304" width="1" height="1" opacity="1"/><rect x="171" y="309" width="1" height="1" opacity="1"/><rect x="171" y="314" width="1" height="1" opacity="1"/><rect x="171" y="315" width="1" height="1" opacity="1"/><rect x="171" y="338" width="1" height="1" opacity=".75"/><rect x="172" y="325" width="1" height="1" opacity=".75"/><rect x="173" y="324" width="1" height="1" opacity=".75"/><rect x="173" y="329" width="1" height="1" opacity=".75"/><rect x="173" y="336" width="1" height="1" opacity="1"/><rect x="173" y="379" width="1" height="1" opacity="1"/><rect x="174" y="351" width="1" height="1" opacity=".75"/><rect x="175" y="341" width="1" height="1" opacity="1"/><rect x="176" y="313" width="1" height="1" opacity=".75"/><rect x="176" y="314" width="1" height="1" opacity="1"/><rect x="176" y="347" width="1" height="1" opacity="1"/><rect x="177" y="294" width="1" height="1" opacity="1"/><rect x="177" y="315" width="1" height="1" opacity=".75"/><rect x="177" y="324" width="1" height="1" opacity="1"/><rect x="178" y="325" width="1" height="1" opacity="1"/><rect x="178" y="344" width="1" height="1" opacity=".75"/><rect x="178" y="346" width="1" height="1" opacity="1"/><rect x="179" y="356" width="1" height="1" opacity="1"/><rect x="180" y="323" width="1" height="1" opacity="1"/><rect x="181" y="299" width="1" height="1" opacity="1"/><rect x="181" y="334" width="1" height="1" opacity="1"/><rect x="182" y="296" width="1" height="1" opacity="1"/><rect x="183" y="304" width="1" height="1" opacity="1"/><rect x="183" y="309" width="1" height="1" opacity=".75"/><rect x="183" y="334" width="1" height="1" opacity="1"/><rect x="184" y="305" width="1" height="1" opacity=".75"/><rect x="185" y="328" width="1" height="1" opacity="1"/><rect x="185" y="338" width="1" height="1" opacity="1"/><rect x="186" y="305" width="1" height="1" opacity="1"/><rect x="186" y="322" width="1" height="1" opacity="1"/><rect x="186" y="323" width="1" height="1" opacity="1"/><rect x="186" y="340" width="1" height="1" opacity="1"/><rect x="187" y="311" width="1" height="1" opacity="1"/><rect x="187" y="312" width="1" height="1" opacity="1"/><rect x="187" y="314" width="1" height="1" opacity="1"/><rect x="188" y="334" width="1" height="1" opacity="1"/><rect x="188" y="339" width="1" height="1" opacity="1"/><rect x="189" y="342" width="1" height="1" opacity="1"/><rect x="190" y="301" width="1" height="1" opacity="1"/><rect x="190" y="302" width="1" height="1" opacity="1"/><rect x="190" y="328" width="1" height="1" opacity="1"/><rect x="190" y="338" width="1" height="1" opacity=".75"/><rect x="190" y="341" width="1" height="1" opacity="1"/><rect x="191" y="296" width="1" height="1" opacity=".75"/><rect x="192" y="298" width="1" height="1" opacity="1"/><rect x="192" y="326" width="1" height="1" opacity=".75"/><rect x="192" y="338" width="1" height="1" opacity="1"/><rect x="193" y="321" width="1" height="1" opacity="1"/><rect x="194" y="300" width="1" height="1" opacity="1"/><rect x="195" y="312" width="1" height="1" opacity="1"/><rect x="195" y="315" width="1" height="1" opacity="1"/><rect x="195" y="331" width="1" height="1" opacity="1"/><rect x="195" y="332" width="1" height="1" opacity="1"/><rect x="195" y="334" width="1" height="1" opacity=".75"/><rect x="195" y="338" width="1" height="1" opacity="1"/><rect x="196" y="304" width="1" height="1" opacity=".75"/><rect x="196" y="313" width="1" height="1" opacity=".75"/><rect x="196" y="322" width="1" height="1" opacity="1"/><rect x="196" y="326" width="1" height="1" opacity="1"/><rect x="196" y="338" width="1" height="1" opacity=".75"/><rect x="197" y="294" width="1" height="1" opacity="1"/><rect x="197" y="310" width="1" height="1" opacity=".75"/><rect x="197" y="324" width="1" height="1" opacity="1"/><rect x="197" y="343" width="1" height="1" opacity="1"/><rect x="198" y="311" width="1" height="1" opacity="1"/><rect x="198" y="331" width="1" height="1" opacity="1"/><rect x="199" y="287" width="1" height="1" opacity="1"/><rect x="199" y="305" width="1" height="1" opacity="1"/><rect x="199" y="326" width="1" height="1" opacity="1"/><rect x="199" y="339" width="1" height="1" opacity="1"/><rect x="200" y="322" width="1" height="1" opacity="1"/><rect x="201" y="289" width="1" height="1" opacity="1"/><rect x="201" y="298" width="1" height="1" opacity="1"/><rect x="201" y="315" width="1" height="1" opacity="1"/><rect x="201" y="319" width="1" height="1" opacity="1"/><rect x="201" y="338" width="1" height="1" opacity="1"/><rect x="202" y="294" width="1" height="1" opacity=".75"/><rect x="202" y="328" width="1" height="1" opacity="1"/><rect x="202" y="336" width="1" height="1" opacity="1"/><rect x="202" y="340" width="1" height="1" opacity=".75"/><rect x="203" y="327" width="1" height="1" opacity="1"/><rect x="204" y="300" width="1" height="1" opacity="1"/><rect x="204" y="306" width="1" height="1" opacity="1"/><rect x="205" y="330" width="1" height="1" opacity="1"/><rect x="206" y="319" width="1" height="1" opacity="1"/><rect x="207" y="332" width="1" height="1" opacity="1"/><rect x="207" y="344" width="1" height="1" opacity=".75"/><rect x="208" y="290" width="1" height="1" opacity="1"/><rect x="208" y="321" width="1" height="1" opacity="1"/><rect x="208" y="333" width="1" height="1" opacity="1"/><rect x="209" y="309" width="1" height="1" opacity="1"/><rect x="211" y="316" width="1" height="1" opacity="1"/><rect x="211" y="327" width="1" height="1" opacity="1"/><rect x="212" y="304" width="1" height="1" opacity="1"/><rect x="213" y="329" width="1" height="1" opacity="1"/><rect x="214" y="291" width="1" height="1" opacity="1"/><rect x="214" y="296" width="1" height="1" opacity="1"/><rect x="214" y="312" width="1" height="1" opacity=".75"/><rect x="214" y="334" width="1" height="1" opacity="1"/><rect x="217" y="303" width="1" height="1" opacity="1"/><rect x="218" y="303" width="1" height="1" opacity="1"/><rect x="218" y="306" width="1" height="1" opacity="1"/><rect x="218" y="315" width="1" height="1" opacity="1"/><rect x="218" y="335" width="1" height="1" opacity="1"/><rect x="219" y="297" width="1" height="1" opacity="1"/><rect x="219" y="313" width="1" height="1" opacity="1"/><rect x="219" y="314" width="1" height="1" opacity="1"/><rect x="219" y="333" width="1" height="1" opacity="1"/><rect x="220" y="324" width="1" height="1" opacity="1"/><rect x="220" y="328" width="1" height="1" opacity="1"/><rect x="221" y="307" width="1" height="1" opacity="1"/><rect x="222" y="327" width="1" height="1" opacity=".75"/><rect x="223" y="308" width="1" height="1" opacity="1"/><rect x="223" y="311" width="1" height="1" opacity="1"/><rect x="224" y="330" width="1" height="1" opacity="1"/><rect x="225" y="295" width="1" height="1" opacity="1"/><rect x="225" y="323" width="1" height="1" opacity="1"/><rect x="225" y="340" width="1" height="1" opacity="1"/><rect x="226" y="303" width="1" height="1" opacity="1"/><rect x="226" y="305" width="1" height="1" opacity=".75"/><rect x="226" y="311" width="1" height="1" opacity="1"/><rect x="226" y="325" width="1" height="1" opacity=".75"/><rect x="228" y="307" width="1" height="1" opacity="1"/><rect x="228" y="337" width="1" height="1" opacity="1"/><rect x="229" y="306" width="1" height="1" opacity="1"/><rect x="229" y="311" width="1" height="1" opacity="1"/><rect x="229" y="314" width="1" height="1" opacity="1"/><rect x="230" y="296" width="1" height="1" opacity=".75"/><rect x="230" y="333" width="1" height="1" opacity="1"/><rect x="231" y="290" width="1" height="1" opacity="1"/><rect x="231" y="300" width="1" height="1" opacity="1"/><rect x="231" y="334" width="1" height="1" opacity=".75"/><rect x="232" y="317" width="1" height="1" opacity="1"/><rect x="232" y="323" width="1" height="1" opacity="1"/><rect x="233" y="284" width="1" height="1" opacity="1"/><rect x="234" y="306" width="1" height="1" opacity="1"/><rect x="234" y="311" width="1" height="1" opacity="1"/><rect x="235" y="289" width="1" height="1" opacity="1"/><rect x="235" y="303" width="1" height="1" opacity=".75"/><rect x="235" y="323" width="1" height="1" opacity="1"/><rect x="235" y="324" width="1" height="1" opacity="1"/><rect x="235" y="327" width="1" height="1" opacity="1"/><rect x="236" y="310" width="1" height="1" opacity="1"/><rect x="237" y="322" width="1" height="1" opacity="1"/><rect x="237" y="329" width="1" height="1" opacity="1"/><rect x="237" y="334" width="1" height="1" opacity="1"/><rect x="238" y="294" width="1" height="1" opacity="1"/><rect x="238" y="327" width="1" height="1" opacity="1"/><rect x="239" y="315" width="1" height="1" opacity="1"/><rect x="239" y="323" width="1" height="1" opacity="1"/><rect x="239" y="326" width="1" height="1" opacity=".75"/><rect x="240" y="289" width="1" height="1" opacity="1"/><rect x="240" y="298" width="1" height="1" opacity=".75"/><rect x="240" y="299" width="1" height="1" opacity="1"/><rect x="240" y="303" width="1" height="1" opacity="1"/><rect x="240" y="313" width="1" height="1" opacity="1"/><rect x="240" y="319" width="1" height="1" opacity=".75"/><rect x="241" y="297" width="1" height="1" opacity="1"/><rect x="241" y="302" width="1" height="1" opacity=".75"/><rect x="241" y="331" width="1" height="1" opacity=".75"/><rect x="242" y="302" width="1" height="1" opacity=".75"/><rect x="242" y="318" width="1" height="1" opacity=".75"/><rect x="243" y="292" width="1" height="1" opacity="1"/><rect x="244" y="298" width="1" height="1" opacity="1"/><rect x="244" y="315" width="1" height="1" opacity="1"/><rect x="245" y="286" width="1" height="1" opacity=".75"/><rect x="245" y="294" width="1" height="1" opacity="1"/><rect x="245" y="297" width="1" height="1" opacity="1"/><rect x="245" y="300" width="1" height="1" opacity="1"/><rect x="245" y="320" width="1" height="1" opacity="1"/><rect x="247" y="311" width="1" height="1" opacity="1"/><rect x="248" y="322" width="1" height="1" opacity="1"/><rect x="248" y="323" width="1" height="1" opacity="1"/><rect x="252" y="325" width="1" height="1" opacity=".75"/><rect x="253" y="291" width="1" height="1" opacity="1"/><rect x="253" y="308" width="1" height="1" opacity="1"/><rect x="253" y="332" width="1" height="1" opacity=".75"/><rect x="254" y="294" width="1" height="1" opacity="1"/><rect x="255" y="293" width="1" height="1" opacity="1"/><rect x="255" y="304" width="1" height="1" opacity=".75"/><rect x="255" y="306" width="1" height="1" opacity="1"/><rect x="255" y="309" width="1" height="1" opacity="1"/><rect x="256" y="333" width="1" height="1" opacity="1"/><rect x="257" y="318" width="1" height="1" opacity="1"/><rect x="258" y="290" width="1" height="1" opacity=".75"/><rect x="258" y="294" width="1" height="1" opacity="1"/><rect x="258" y="319" width="1" height="1" opacity="1"/><rect x="259" y="286" width="1" height="1" opacity="1"/><rect x="259" y="305" width="1" height="1" opacity="1"/><rect x="259" y="306" width="1" height="1" opacity="1"/><rect x="259" y="314" width="1" height="1" opacity="1"/><rect x="260" y="305" width="1" height="1" opacity=".75"/><rect x="260" y="313" width="1" height="1" opacity="1"/><rect x="260" y="315" width="1" height="1" opacity="1"/><rect x="260" y="319" width="1" height="1" opacity="1"/><rect x="260" y="326" width="1" height="1" opacity="1"/><rect x="261" y="284" width="1" height="1" opacity="1"/><rect x="261" y="305" width="1" height="1" opacity="1"/><rect x="261" y="306" width="1" height="1" opacity=".75"/><rect x="261" y="312" width="1" height="1" opacity="1"/><rect x="262" y="286" width="1" height="1" opacity=".75"/><rect x="262" y="297" width="1" height="1" opacity="1"/><rect x="264" y="302" width="1" height="1" opacity="1"/><rect x="265" y="291" width="1" height="1" opacity="1"/><rect x="265" y="297" width="1" height="1" opacity=".75"/><rect x="265" y="329" width="1" height="1" opacity="1"/><rect x="266" y="292" width="1" height="1" opacity="1"/><rect x="266" y="309" width="1" height="1" opacity="1"/><rect x="266" y="326" width="1" height="1" opacity="1"/><rect x="267" y="291" width="1" height="1" opacity="1"/><rect x="269" y="295" width="1" height="1" opacity=".75"/><rect x="270" y="290" width="1" height="1" opacity=".75"/><rect x="270" y="296" width="1" height="1" opacity="1"/><rect x="270" y="308" width="1" height="1" opacity="1"/><rect x="270" y="310" width="1" height="1" opacity="1"/><rect x="271" y="294" width="1" height="1" opacity=".75"/><rect x="271" y="298" width="1" height="1" opacity=".75"/><rect x="273" y="281" width="1" height="1" opacity=".75"/><rect x="273" y="297" width="1" height="1" opacity="1"/><rect x="273" y="336" width="1" height="1" opacity="1"/><rect x="274" y="282" width="1" height="1" opacity="1"/><rect x="274" y="285" width="1" height="1" opacity=".75"/><rect x="274" y="292" width="1" height="1" opacity="1"/><rect x="276" y="304" width="1" height="1" opacity="1"/><rect x="277" y="283" width="1" height="1" opacity="1"/><rect x="277" y="287" width="1" height="1" opacity="1"/><rect x="277" y="303" width="1" height="1" opacity="1"/><rect x="278" y="317" width="1" height="1" opacity="1"/><rect x="279" y="300" width="1" height="1" opacity="1"/><rect x="279" y="305" width="1" height="1" opacity="1"/><rect x="279" y="309" width="1" height="1" opacity="1"/><rect x="280" y="295" width="1" height="1" opacity="1"/><rect x="281" y="284" width="1" height="1" opacity="1"/><rect x="281" y="285" width="1" height="1" opacity=".75"/><rect x="281" y="287" width="1" height="1" opacity="1"/><rect x="282" y="285" width="1" height="1" opacity="1"/><rect x="283" y="315" width="1" height="1" opacity="1"/><rect x="283" y="331" width="1" height="1" opacity="1"/><rect x="284" y="300" width="1" height="1" opacity=".75"/><rect x="284" y="309" width="1" height="1" opacity="1"/><rect x="284" y="315" width="1" height="1" opacity="1"/><rect x="285" y="295" width="1" height="1" opacity="1"/><rect x="285" y="302" width="1" height="1" opacity="1"/><rect x="285" y="311" width="1" height="1" opacity="1"/><rect x="285" y="313" width="1" height="1" opacity="1"/><rect x="286" y="314" width="1" height="1" opacity="1"/><rect x="286" y="315" width="1" height="1" opacity=".75"/><rect x="288" y="284" width="1" height="1" opacity="1"/><rect x="289" y="312" width="1" height="1" opacity="1"/><rect x="291" y="320" width="1" height="1" opacity="1"/><rect x="291" y="321" width="1" height="1" opacity="1"/><rect x="292" y="297" width="1" height="1" opacity="1"/><rect x="293" y="316" width="1" height="1" opacity="1"/><rect x="293" y="317" width="1" height="1" opacity="1"/><rect x="296" y="292" width="1" height="1" opacity="1"/><rect x="296" y="297" width="1" height="1" opacity="1"/><rect x="297" y="285" width="1" height="1" opacity="1"/><rect x="297" y="319" width="1" height="1" opacity="1"/><rect x="297" y="323" width="1" height="1" opacity="1"/><rect x="298" y="280" width="1" height="1" opacity="1"/><rect x="299" y="274" width="1" height="1" opacity="1"/><rect x="299" y="305" width="1" height="1" opacity="1"/><rect x="300" y="312" width="1" height="1" opacity="1"/><rect x="301" y="284" width="1" height="1" opacity="1"/><rect x="301" y="320" width="1" height="1" opacity=".75"/><rect x="303" y="290" width="1" height="1" opacity="1"/><rect x="303" y="295" width="1" height="1" opacity="1"/><rect x="303" y="298" width="1" height="1" opacity="1"/><rect x="303" y="304" width="1" height="1" opacity="1"/><rect x="304" y="299" width="1" height="1" opacity="1"/><rect x="304" y="302" width="1" height="1" opacity="1"/><rect x="304" y="312" width="1" height="1" opacity="1"/><rect x="305" y="302" width="1" height="1" opacity="1"/><rect x="306" y="277" width="1" height="1" opacity="1"/><rect x="306" y="297" width="1" height="1" opacity="1"/><rect x="306" y="308" width="1" height="1" opacity="1"/><rect x="307" y="280" width="1" height="1" opacity=".75"/><rect x="307" y="283" width="1" height="1" opacity="1"/><rect x="308" y="285" width="1" height="1" opacity="1"/><rect x="310" y="327" width="1" height="1" opacity="1"/><rect x="311" y="291" width="1" height="1" opacity="1"/><rect x="311" y="309" width="1" height="1" opacity="1"/><rect x="312" y="305" width="1" height="1" opacity="1"/><rect x="313" y="284" width="1" height="1" opacity="1"/><rect x="314" y="304" width="1" height="1" opacity="1"/><rect x="315" y="279" width="1" height="1" opacity="1"/><rect x="316" y="287" width="1" height="1" opacity=".75"/><rect x="316" y="324" width="1" height="1" opacity="1"/><rect x="318" y="321" width="1" height="1" opacity=".75"/><rect x="319" y="276" width="1" height="1" opacity="1"/><rect x="319" y="311" width="1" height="1" opacity="1"/><rect x="320" y="286" width="1" height="1" opacity="1"/><rect x="320" y="316" width="1" height="1" opacity="1"/><rect x="322" y="283" width="1" height="1" opacity="1"/><rect x="322" y="288" width="1" height="1" opacity="1"/><rect x="323" y="295" width="1" height="1" opacity="1"/><rect x="324" y="290" width="1" height="1" opacity="1"/><rect x="324" y="301" width="1" height="1" opacity="1"/><rect x="324" y="317" width="1" height="1" opacity=".75"/><rect x="325" y="290" width="1" height="1" opacity="1"/><rect x="325" y="294" width="1" height="1" opacity="1"/><rect x="325" y="312" width="1" height="1" opacity="1"/><rect x="326" y="285" width="1" height="1" opacity="1"/><rect x="327" y="279" width="1" height="1" opacity=".75"/><rect x="327" y="297" width="1" height="1" opacity="1"/><rect x="327" y="310" width="1" height="1" opacity="1"/><rect x="328" y="277" width="1" height="1" opacity=".75"/><rect x="331" y="272" width="1" height="1" opacity="1"/><rect x="331" y="306" width="1" height="1" opacity="1"/><rect x="331" y="315" width="1" height="1" opacity="1"/><rect x="332" y="283" width="1" height="1" opacity="1"/><rect x="332" y="285" width="1" height="1" opacity="1"/><rect x="332" y="288" width="1" height="1" opacity=".75"/><rect x="334" y="281" width="1" height="1" opacity=".75"/><rect x="334" y="303" width="1" height="1" opacity="1"/><rect x="336" y="273" width="1" height="1" opacity="1"/><rect x="337" y="294" width="1" height="1" opacity="1"/><rect x="337" y="313" width="1" height="1" opacity="1"/><rect x="339" y="296" width="1" height="1" opacity="1"/><rect x="339" y="303" width="1" height="1" opacity="1"/><rect x="340" y="290" width="1" height="1" opacity="1"/><rect x="340" y="308" width="1" height="1" opacity="1"/><rect x="341" y="293" width="1" height="1" opacity="1"/><rect x="342" y="293" width="1" height="1" opacity="1"/><rect x="343" y="276" width="1" height="1" opacity="1"/><rect x="343" y="288" width="1" height="1" opacity="1"/><rect x="344" y="293" width="1" height="1" opacity=".75"/><rect x="345" y="286" width="1" height="1" opacity="1"/><rect x="345" y="309" width="1" height="1" opacity="1"/><rect x="347" y="300" width="1" height="1" opacity="1"/><rect x="348" y="287" width="1" height="1" opacity="1"/><rect x="349" y="287" width="1" height="1" opacity=".75"/><rect x="349" y="297" width="1" height="1" opacity=".75"/><rect x="349" y="298" width="1" height="1" opacity="1"/><rect x="350" y="290" width="1" height="1" opacity="1"/><rect x="350" y="303" width="1" height="1" opacity="1"/><rect x="353" y="278" width="1" height="1" opacity="1"/><rect x="354" y="279" width="1" height="1" opacity=".75"/><rect x="354" y="291" width="1" height="1" opacity="1"/><rect x="355" y="311" width="1" height="1" opacity=".75"/><rect x="356" y="310" width="1" height="1" opacity="1"/><rect x="357" y="269" width="1" height="1" opacity=".75"/><rect x="357" y="274" width="1" height="1" opacity=".75"/><rect x="357" y="278" width="1" height="1" opacity="1"/><rect x="357" y="295" width="1" height="1" opacity=".75"/><rect x="358" y="276" width="1" height="1" opacity="1"/><rect x="358" y="284" width="1" height="1" opacity="1"/><rect x="358" y="301" width="1" height="1" opacity="1"/><rect x="358" y="309" width="1" height="1" opacity="1"/><rect x="359" y="314" width="1" height="1" opacity="1"/><rect x="360" y="295" width="1" height="1" opacity="1"/><rect x="360" y="303" width="1" height="1" opacity=".75"/><rect x="360" y="306" width="1" height="1" opacity=".75"/><rect x="362" y="276" width="1" height="1" opacity=".75"/><rect x="362" y="279" width="1" height="1" opacity=".75"/><rect x="363" y="286" width="1" height="1" opacity="1"/><rect x="365" y="298" width="1" height="1" opacity="1"/><rect x="366" y="281" width="1" height="1" opacity="1"/><rect x="366" y="283" width="1" height="1" opacity="1"/><rect x="367" y="277" width="1" height="1" opacity=".75"/><rect x="367" y="284" width="1" height="1" opacity="1"/><rect x="367" y="309" width="1" height="1" opacity="1"/><rect x="368" y="271" width="1" height="1" opacity=".75"/><rect x="369" y="297" width="1" height="1" opacity="1"/><rect x="370" y="278" width="1" height="1" opacity="1"/><rect x="370" y="292" width="1" height="1" opacity="1"/><rect x="371" y="275" width="1" height="1" opacity="1"/><rect x="371" y="296" width="1" height="1" opacity="1"/><rect x="373" y="270" width="1" height="1" opacity=".75"/><rect x="373" y="295" width="1" height="1" opacity="1"/><rect x="374" y="268" width="1" height="1" opacity=".75"/><rect x="374" y="272" width="1" height="1" opacity="1"/><rect x="375" y="268" width="1" height="1" opacity="1"/><rect x="375" y="272" width="1" height="1" opacity="1"/><rect x="375" y="294" width="1" height="1" opacity=".75"/><rect x="375" y="299" width="1" height="1" opacity="1"/><rect x="377" y="303" width="1" height="1" opacity="1"/><rect x="378" y="302" width="1" height="1" opacity="1"/><rect x="379" y="298" width="1" height="1" opacity="1"/><rect x="382" y="266" width="1" height="1" opacity="1"/><rect x="383" y="284" width="1" height="1" opacity="1"/><rect x="384" y="278" width="1" height="1" opacity="1"/><rect x="389" y="267" width="1" height="1" opacity="1"/><rect x="391" y="273" width="1" height="1" opacity="1"/><rect x="391" y="277" width="1" height="1" opacity="1"/><rect x="393" y="305" width="1" height="1" opacity="1"/><rect x="395" y="289" width="1" height="1" opacity="1"/><rect x="405" y="254" width="1" height="1" opacity="1"/><rect x="407" y="283" width="1" height="1" opacity="1"/><rect x="414" y="289" width="1" height="1" opacity="1"/><rect x="423" y="277" width="1" height="1" opacity="1"/><rect x="425" y="271" width="1" height="1" opacity="1"/></g>
<polyline points="62.3,197.9 65.4,169.3 69.1,184.7 71.2,168.6 73.7,183.0 76.2,173.9 78.5,189.6 80.7,170.6 84.0,183.0 85.6,168.6 87.6,188.0 90.1,174.7 93.4,185.5 95.6,168.1 97.7,183.0 100.5,172.3 104.2,198.7 108.8,178.9 113.3,201.2 119.2,178.9 126.5,202.1 131.7,178.4 138.3,199.6 144.4,178.4 148.5,203.7 151.5,183.8 154.3,202.9 157.5,185.6 161.6,207.9 164.6,186.4 167.1,201.3 168.5,199.7 170.7,183.1 173.7,213.7 175.7,200.5 177.3,208.8 181.1,203.0 183.1,207.9 184.8,197.2 186.8,216.2 188.6,193.4 190.6,218.7 192.5,194.4 194.4,213.7 196.0,203.0 197.7,211.3 201.3,203.3 203.8,207.9 205.1,199.7 207.1,221.2 212.6,199.2 216.6,221.2 220.4,202.5 225.3,218.7 231.1,206.3 238.6,216.2 240.0,223.4 241.7,223.9 244.1,229.3 247.5,227.2 256.1,215.3 260.4,233.3 263.2,217.3 269.5,233.3 272.8,217.3 278.6,234.3 282.2,218.4 283.9,232.2 287.2,226.4 290.5,231.3 298.4,250.4 307.9,225.5 314.0,247.5 315.3,247.1 317.8,235.5 322.0,249.2 326.1,234.3 329.9,250.9 331.6,240.4 334.4,263.8 340.4,242.4 348.2,265.5 354.0,244.5 357.3,268.0 359.3,249.8 362.3,267.2 364.4,242.4 366.8,260.6 368.4,255.3 379.7,267.2 386.0,277.9 393.2,260.7 395.6,279.6 401.2,270.3 403.2,273.2 405.8,272.3 408.5,277.2 410.7,285.8 412.5,285.8 414.4,294.4 417.7,284.5 421.7,309.7 423.7,291.8 425.7,298.4 427.7,291.1" fill="none" stroke="#12b0f0" stroke-width="1" stroke-linejoin="round" shape-rendering="crispEdges"/>
</svg>
<div class="t " style="left:62px;top:129px;">MB/sec</div>
<div class="t r" style="left:398px;top:129px;width:29px;letter-spacing:-0.5px;">ms</div>
<div class="t r" style="left:27px;top:136px;width:30px;">150</div>
<div class="t r" style="left:27px;top:230px;width:30px;">100</div>
<div class="t r" style="left:27px;top:325px;width:30px;">50</div>
<div class="t " style="left:432px;top:136px;">45</div>
<div class="t " style="left:432px;top:230px;">30</div>
<div class="t " style="left:432px;top:325px;">15</div>
<div class="t c" style="left:42px;top:427px;width:40px;">0</div>
<div class="t c" style="left:78px;top:427px;width:40px;">10</div>
<div class="t c" style="left:115px;top:427px;width:40px;">20</div>
<div class="t c" style="left:151px;top:427px;width:40px;">30</div>
<div class="t c" style="left:188px;top:427px;width:40px;">40</div>
<div class="t c" style="left:224px;top:427px;width:40px;">50</div>
<div class="t c" style="left:261px;top:427px;width:40px;">60</div>
<div class="t c" style="left:297px;top:427px;width:40px;">70</div>
<div class="t c" style="left:334px;top:427px;width:40px;">80</div>
<div class="t c" style="left:370px;top:427px;width:40px;">90</div>
<div class="t " style="left:413.8px;top:427px;letter-spacing:-0.33px;">100%</div>
<div id="start">Start</div>
<div id="grp"></div>
<div class="t " style="left:464px;top:159px;background:#fff;padding:0 3px;letter-spacing:-0.3px;">Transfer Rate</div>
<div class="t " style="left:464px;top:176px;letter-spacing:-0.68px;">Minimum</div>
<div class="val blue" style="top:195px">62.0 MB/sec</div>
<div class="t " style="left:464px;top:212px;letter-spacing:-0.7px;">Maximum</div>
<div class="val blue" style="top:231px">136.5 MB/sec</div>
<div class="t " style="left:464px;top:248px;letter-spacing:-0.13px;">Average:</div>
<div class="val blue" style="top:267px">107.4 MB/sec</div>
<div class="t " style="left:464px;top:302px;letter-spacing:-0.17px;">Access Time:</div>
<div class="val" style="top:319px;color:#f5f520;font-size:12px;letter-spacing:-0.35px">15.6 ms</div>
<div class="t " style="left:464px;top:350px;letter-spacing:-0.3px;">Burst Rate</div>
<div class="val" style="top:369px;color:#fff">132.9 MB/sec</div>
<div class="t " style="left:464px;top:396px;letter-spacing:-0.32px;">CPU Usage</div>
<div class="val" style="top:415px;color:#fff;letter-spacing:-0.4px">-1.0%</div>
</body></html>
